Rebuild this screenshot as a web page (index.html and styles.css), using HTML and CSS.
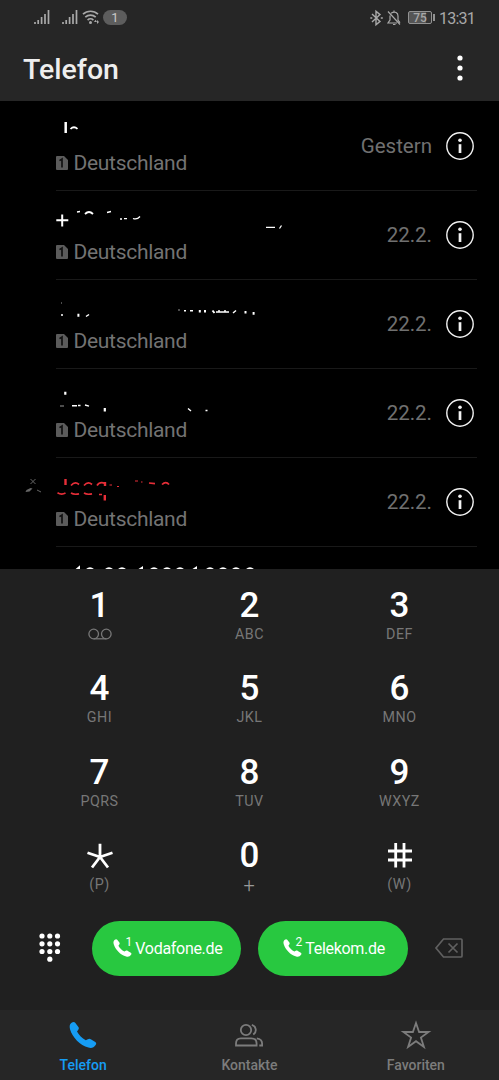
FILE: index.html
```html
<!DOCTYPE html>
<html lang="de">
<head>
<meta charset="utf-8">
<title>Telefon</title>
<link rel="stylesheet" href="styles.css">
</head>
<body>
<svg class="defs" aria-hidden="true">
  <symbol id="signal" viewBox="0 0 16 16"><path d="M1 13v2M4.2 11v4M7.6 8v7M11 5v10M14.5 1v14" stroke="currentColor" stroke-width="1.7"/></symbol>
  <symbol id="sim" viewBox="0 0 12 14"><path d="M1 0h7l4 4v9a1 1 0 0 1-1 1H1a1 1 0 0 1-1-1V1a1 1 0 0 1 1-1z" fill="#5b5b5b"/><path d="M3.5 4.6L6 3v8.5" fill="none" stroke="#111" stroke-width="1.7"/></symbol>
  <symbol id="info" viewBox="0 0 28 28"><circle cx="14" cy="14" r="13.2" fill="none" stroke="#f2f2f2" stroke-width="1.4"/><circle cx="14" cy="8.2" r="1.8" fill="#f2f2f2"/><path d="M14 12.2v8.8" stroke="#f2f2f2" stroke-width="2.7"/></symbol>
  <symbol id="phone" viewBox="0 0 28 28"><path d="M2.2 2.1C4 .7 5.2.6 6.2 1.7L9.4 6c.8 1.1.5 2.1-.3 3.1L8 10.6c1.9 3.6 5 6.7 8.8 8.7l2-1.1c1-.6 2-.7 3 .1l4.5 2.8c1.2.8 1.1 2 .3 3-1.7 2.6-4.2 3.4-7.2 2.5C11.1 24.2 3.4 16.3 1.1 8.4.4 5.9.4 3.7 2.2 2.1z" fill="currentColor"/></symbol>
</svg>
<header class="header">
  <div class="status">
    <div class="status-left">
      <svg class="signal"><use href="#signal"/></svg>
      <svg class="signal second"><use href="#signal"/></svg>
      <svg class="wifi" viewBox="0 0 18 16"><path d="M1 5.2a11 11 0 0 1 15 0M3.3 8.2a7.7 7.7 0 0 1 10.4 0M5.6 11.1a4.2 4.2 0 0 1 5.8 0" fill="none" stroke="currentColor" stroke-width="1.7"/><circle cx="8.5" cy="13.5" r="1.5" fill="currentColor"/><path d="M13.5 10.7L12 13h3zM15 11l2 2-2 2z" fill="currentColor"/></svg>
      <span class="count">1</span>
    </div>
    <div class="status-right">
      <svg class="bt" viewBox="0 0 13 16"><path d="M2 4l8 7.4-4 3.4V1.2l4 3.4L2 12M.3 8h2M10.8 8h2" fill="none" stroke="currentColor" stroke-width="1.4"/></svg>
      <svg class="bell" viewBox="0 0 14 16"><path d="M4 3.2C8.4.5 11 3.3 11 6v4l2 2.7M10 13H1l2-3V5.5M6 14.5h2.5M7 .5v2M1 1.5l12 13" fill="none" stroke="currentColor" stroke-width="1.2"/></svg>
      <span class="battery"><span>75</span></span>
      <span class="time">13:31</span>
    </div>
  </div>
  <div class="titlebar">
    <h1>Telefon</h1>
    <svg class="more" viewBox="0 0 6 26"><circle cx="3" cy="3" r="2.6"/><circle cx="3" cy="13" r="2.6"/><circle cx="3" cy="23" r="2.6"/></svg>
  </div>
</header>
<main class="calls">
  <section class="call">
    <div class="entry"><svg class="mark" viewBox="56 110 250 40"><path d="M65.7 122v11" stroke-width="2.5"/><path d="M70.5 129q3.3-3.5 7-.2" stroke-width="1.8"/></svg><p><svg class="sim"><use href="#sim"/></svg>Deutschland</p></div>
    <time>Gestern</time><svg class="info"><use href="#info"/></svg>
  </section>
  <section class="call">
    <div class="entry"><svg class="mark" viewBox="56 199 250 40"><path d="M56.3 220.3h12M62.2 214.5v12" stroke-width="2"/><path d="M85 214q4-4 8 0" stroke-width="1.8"/><path d="M77 212l3-.5M107 212.5l4-1M120 219h2M124 218.7h3M133 218.5q4 1.5 7-2M266 227.3h9M279.5 228.5l2-3" stroke-width="1.3"/></svg><p><svg class="sim"><use href="#sim"/></svg>Deutschland</p></div>
    <time>22.2.</time><svg class="info"><use href="#info"/></svg>
  </section>
  <section class="call">
    <div class="entry"><svg class="mark" viewBox="56 288 250 40"><path d="M78.4 313.8v3M199.8 310v2.5M205 310v2.5M212.5 310.5l2 2.5M245.5 311v2.5M253.6 312v2.8" stroke-width="2"/><path d="M61 315h2M86 316.5l3-2M184 310.8h2M190 310.8h3M216 312h13M219 310v2M225 310v2M233 313l3-2.5" stroke-width="1.5"/><path d="M61 303h1M178 310h2" stroke-width=".6"/></svg><p><svg class="sim"><use href="#sim"/></svg>Deutschland</p></div>
    <time>22.2.</time><svg class="info"><use href="#info"/></svg>
  </section>
  <section class="call">
    <div class="entry"><svg class="mark" viewBox="56 377 250 40"><path d="M65.3 391.8v3M104.8 408v3.5" stroke-width="2.2"/><path d="M72 405.8h5M78 405.5h2.5M85 405l4 1.2M188 408.5l3 2.5M205.5 410.5h2" stroke-width="1.4"/><path d="M60 406h4" stroke-width=".6"/></svg><p><svg class="sim"><use href="#sim"/></svg>Deutschland</p></div>
    <time>22.2.</time><svg class="info"><use href="#info"/></svg>
  </section>
  <section class="call missed">
    <svg class="missed-icon" viewBox="24 476 20 20"><path d="M30.5 479l5 5M35.5 479l-5 5M37 490l4 2" stroke="#666" fill="none"/><path d="M25.5 492l1-2 4-2 2 .5-3 3z" fill="#666"/></svg>
    <div class="entry"><svg class="mark" viewBox="56 466 250 40"><path d="M65.5 479v6M105 482v4M104.8 495v5.5" stroke-width="2.4"/><path d="M71 485.5q4-4.5 8-1M84 485.5q4-4.5 8-1M97 485.5q3-4.5 8-2M57.5 492.8q4 2.5 8 .3M71 493q3 2 8 .8M84 493q3 2 8 .8M99 494.5h3M149 483l6 .7M162 484.5q4-3.8 7 0" stroke-width="1.7"/><path d="M109.5 485h2.5M117 486.5h2M135 481h3M141 482h1.5" stroke-width="1.2"/></svg><p><svg class="sim"><use href="#sim"/></svg>Deutschland</p></div>
    <time>22.2.</time><svg class="info"><use href="#info"/></svg>
  </section>
  <section class="call">
    <div class="entry"><svg class="mark" viewBox="56 554 250 40"><path d="M76 569l3-2.5v3M86 569.5q4-4.5 8 0M105 569.5q4-4.5 8 0M118 569.5q4-4.5 8 0M139 568.8l3-2v3M150 569.5q4-4.5 8 0M163 569.5q4-4.5 8 0M176 569.5q4-4.5 8 0M193 568.8l3-2v3M206 569.5q4-4.5 8 0M219 569.5q4-4.5 8 0M232 569.5q4-4.5 8 0M246 569.5q4-4.5 8 0" stroke-width="2"/></svg></div>
  </section>
</main>
<section class="dialer">
  <div class="keys">
    <button><b>1</b><svg class="voicemail" viewBox="0 0 24 12"><path d="M5.7 10.8h12.6" /><circle cx="5.7" cy="6" r="4.8"/><circle cx="18.3" cy="6" r="4.8"/></svg></button>
    <button><b>2</b><small>ABC</small></button>
    <button><b>3</b><small>DEF</small></button>
    <button><b>4</b><small>GHI</small></button>
    <button><b>5</b><small>JKL</small></button>
    <button><b>6</b><small>MNO</small></button>
    <button><b>7</b><small>PQRS</small></button>
    <button><b>8</b><small>TUV</small></button>
    <button><b>9</b><small>WXYZ</small></button>
    <button><svg class="symbol" viewBox="0 0 28 40"><path d="M14 22V8.8M14 22L1.5 17.7M14 22l12.5-4.3M14 22L6 32.5M14 22l8 10.5"/></svg><small>(P)</small></button>
    <button><b>0</b><small class="plus">+</small></button>
    <button><svg class="symbol" viewBox="0 0 28 40"><path d="M9.7 8v24.5M18 8v24.5M2 16h24M2 25h24"/></svg><small>(W)</small></button>
  </div>
  <div class="actions">
    <svg class="pad" viewBox="0 0 22 30"><g fill="#fff"><circle cx="3" cy="3" r="2.6"/><circle cx="10.8" cy="3" r="2.6"/><circle cx="18.5" cy="3" r="2.6"/><circle cx="3" cy="10.8" r="2.6"/><circle cx="10.8" cy="10.8" r="2.6"/><circle cx="18.5" cy="10.8" r="2.6"/><circle cx="3" cy="18.5" r="2.6"/><circle cx="10.8" cy="18.5" r="2.6"/><circle cx="18.5" cy="18.5" r="2.6"/><circle cx="10.8" cy="26.2" r="2.6"/></g></svg>
    <button class="dial"><span class="sim-phone"><svg><use href="#phone"/></svg><i>1</i></span><span class="carrier">Vodafone.de</span></button>
    <button class="dial"><span class="sim-phone"><svg><use href="#phone"/></svg><i>2</i></span><span class="carrier">Telekom.de</span></button>
    <svg class="delete" viewBox="0 0 28 20"><path d="M8.5 1H26a1 1 0 0 1 1 1v16a1 1 0 0 1-1 1H8.5L1 10zM13.5 5.5l9 9M22.5 5.5l-9 9"/></svg>
  </div>
</section>
<nav class="tabs">
  <a class="active"><svg class="tab-phone"><use href="#phone"/></svg><span>Telefon</span></a>
  <a><svg class="tab-icon" viewBox="0 -1 28 28"><circle cx="11" cy="8" r="5.2"/><path d="M5.8 16.3h10.5c3.3 0 5.3 2 5.3 5.3v1.9H1v-2c0-3.3 1.8-5.2 4.8-5.2zM16.8 2.8a5.4 5.4 0 0 1 1.4 9.8M21.8 16.3c3.4.4 5.3 2.5 5.3 5.3v1.9h-2.8"/></svg><span>Kontakte</span></a>
  <a><svg class="tab-icon" viewBox="0 0 28 28"><path d="M14 2l3.1 9h9.5l-7.7 5.6 3 9.4-7.9-5.8L6.1 26l3-9.4L1.4 11h9.5z"/></svg><span>Favoriten</span></a>
</nav>
</body>
</html>
```
FILE: styles.css
```css
* { box-sizing: border-box; }
body { margin: 0; width: 499px; height: 1080px; background: #000; color: #fff; font-family: Roboto, sans-serif; display: flex; flex-direction: column; overflow: hidden; }
button { border: 0; padding: 0; background: none; color: inherit; font: inherit; }
svg { display: block; flex: none; overflow: visible; }
.defs { position: absolute; width: 0; height: 0; }
.header { height: 101px; flex: none; background: #262626; }
.status { height: 36px; display: flex; justify-content: space-between; padding: 0 24px 0 34px; color: #a9a9a9; }
.status-left, .status-right { display: flex; align-items: center; }
.signal { width: 16px; height: 16px; margin-top: -2px; }
.second { margin-left: 12px; }
.wifi { width: 18px; height: 16px; margin-left: 4px; margin-top: -2px; }
.count { width: 24px; height: 15px; margin-left: 3px; border-radius: 8px; background: #5d5d5d; color: #c8c8c8; font-size: 13px; line-height: 16px; text-align: center; margin-top: -1px; }
.bt { width: 13px; height: 16px; margin-top: -1px; }
.bell { width: 14px; height: 16px; margin-left: 4px; margin-top: -1px; }
.battery { position: relative; width: 24px; height: 13px; margin-left: 7px; margin-top: -1px; border: 1px solid #929292; border-radius: 2px; background: linear-gradient(90deg, #555 75%, #333 75%); font-size: 12px; line-height: 12px; font-weight: 500; text-align: center; }
.battery::after { content: ""; position: absolute; left: 24px; top: 2px; width: 2px; height: 7px; background: #929292; }
.time { width: 36px; margin-left: 7px; font-size: 16px; white-space: nowrap; letter-spacing: -.8px; }
.titlebar { height: 65px; padding: 0 36px 0 23px; display: flex; justify-content: space-between; align-items: center; }
h1 { margin: 2px 0 0; font-size: 28.5px; line-height: 36px; font-weight: 500; color: #eee; }
.more { width: 6px; height: 26px; fill: #fff; margin-top: -1px; }
.calls { height: 468px; flex: none; overflow: hidden; padding-top: 1px; }
.call { position: relative; height: 89px; margin: 0 22px 0 56px; border-bottom: 1px solid #191919; display: flex; align-items: center; }
.entry { flex: 1; align-self: stretch; padding-top: 8px; }
.mark { width: 250px; height: 40px; fill: none; stroke: #fff; }
.entry p { margin: 0; display: flex; align-items: center; height: 26px; font-size: 21px; letter-spacing: -.3px; color: #737373; }
.sim { width: 12px; height: 14px; margin-right: 5.5px; }
.call time { color: #707070; font-size: 20.5px; margin-right: 14px; }
.info { width: 28px; height: 28px; margin-right: 3px; }
.missed .mark { stroke: #e62e38; }
.missed-icon { position: absolute; left: -32px; top: 18px; width: 20px; height: 20px; }
.dialer { height: 441px; flex: none; background: #202020; display: flex; flex-direction: column; }
.keys { height: 343px; display: grid; grid-template-columns: 150px 150px 150px; grid-auto-rows: 83.3px; justify-content: center; padding-top: 16px; }
.keys button { display: flex; flex-direction: column; align-items: center; justify-content: flex-start; }
.keys b { height: 40px; font-size: 35px; line-height: 42px; font-weight: 500; }
.keys small { height: 20px; font-size: 14.3px; line-height: 18px; color: #777; letter-spacing: .5px; }
.keys .plus { font-size: 20px; font-weight: 300; color: #999; line-height: 20px; }
.voicemail { width: 24px; height: 12px; margin-top: 3px; fill: none; stroke: #777; stroke-width: 1.3; }
.symbol { width: 28px; height: 40px; fill: none; stroke: #fff; stroke-width: 2.8; }
.actions { height: 80px; padding: 0 36px 0 39px; display: flex; align-items: center; margin-top: -4px; }
.pad { width: 22px; height: 30px; margin-right: 30.5px; }
.dial { width: 150px; height: 55px; border-radius: 28px; background: #28c840; display: flex; align-items: center; justify-content: center; gap: 3px; margin-right: 16.5px; padding-left: 3px; }
.sim-phone { position: relative; width: 19px; height: 20px; }
.sim-phone svg { width: 19px; height: 20px; }
.sim-phone i { position: absolute; right: 0; top: -2px; font-size: 12px; line-height: 12px; font-style: normal; }
.carrier { font-size: 16px; letter-spacing: -.3px; white-space: nowrap; }
.delete { width: 28px; height: 20px; margin-left: 11px; fill: none; stroke: #606060; stroke-width: 1.7; }
.tabs { height: 70px; flex: none; background: #262626; display: grid; grid-template-columns: repeat(3, 1fr); }
.tabs a { display: flex; flex-direction: column; align-items: center; color: #7c7c7c; padding-top: 11px; font-size: 14px; line-height: 22px; font-weight: 500; }
.tabs .active { color: #169cf3; }
.tab-phone { width: 28px; height: 28px; }
.tab-icon { width: 28px; height: 28px; fill: none; stroke: currentColor; stroke-width: 1.8; }
.tabs span { margin-top: 5px; }
```
